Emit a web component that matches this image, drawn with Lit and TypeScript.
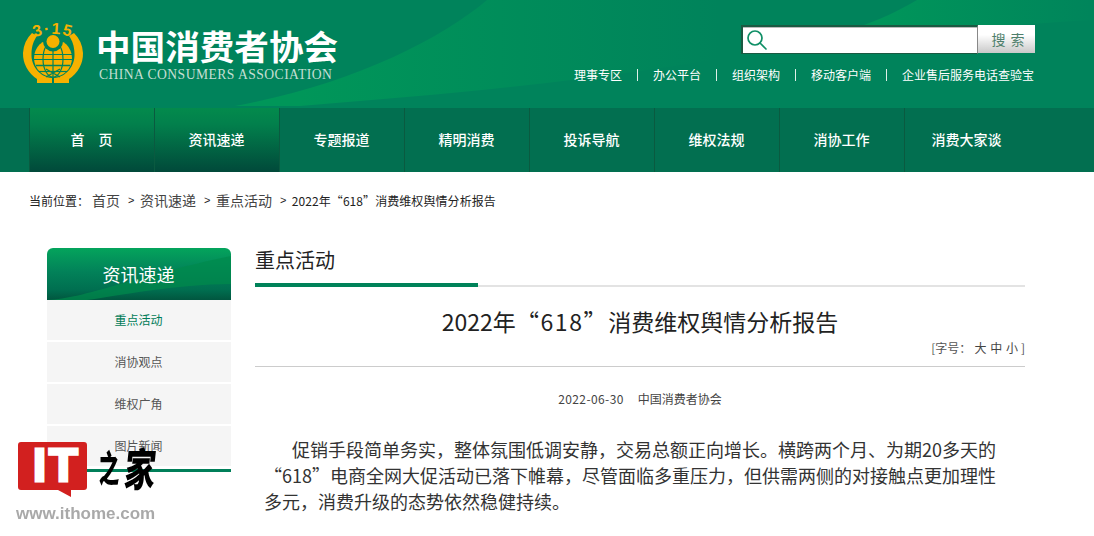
import { LitElement, html, css } from "lit";
import { customElement } from "lit/decorators.js";

@customElement("app-root")
export class AppRoot extends LitElement {
  static styles = css`
    :host { display: block; width: 1094px; height: 536px; overflow: hidden; position: relative; background: #fff; font-family: "Noto Sans CJK SC", "Noto Sans", sans-serif; color: #333; }
    .header { position: relative; height: 108px; background: #00835b; display: flex; justify-content: space-between; overflow: hidden; }
    .swoosh { position: absolute; left: 0; top: 0; width: 1094px; height: 108px; }
    .brand { position: relative; display: flex; gap: 11px; padding: 21px 0 0 22px; }
    .logo { width: 62px; height: 64px; flex: none; overflow: visible; }
    .brand-text { display: flex; flex-direction: column; padding-top: 5px; }
    .cn { font-size: 34.6px; line-height: 38px; margin-left: 1px; font-weight: 700; color: #fff; white-space: nowrap; height: 38px; }
    .en { font-family: "Liberation Serif", serif; font-size: 13.6px; letter-spacing: .47px; line-height: 16px; color: #c4dfd3; margin: 3px 0 0 4px; white-space: nowrap; }
    .tools { position: relative; display: flex; flex-direction: column; align-items: flex-end; padding: 25px 59px 0 0; }
    .search { display: flex; height: 29px; }
    .input { width: 237px; box-sizing: border-box; height: 29px; background: #fff; border: 1px solid #1a5a42; border-top-width: 2px; border-left-width: 2px; border-right-color: #888; box-shadow: inset 0 1px 0 #bbb; display: flex; align-items: center; padding-left: 3px; }
    .btn { width: 57px; height: 28px; background: linear-gradient(#fff 35%, #c9c9c9); color: #4f7f6c; font-size: 14px; letter-spacing: 5px; text-indent: 8px; text-align: center; line-height: 28px; }
    .links { display: flex; align-items: center; margin: 12px 1px 0 0; color: #fff; font-size: 12px; line-height: 18px; }
    .links i { width: 1px; height: 12px; background: #dff0e8; margin: 0 15px; }
    .nav { height: 64px; background: #026f50; padding-left: 29px; display: flex; }
    .nav a { width: 123px; padding-right: 1px; border-left: 1px solid #0a5a40; text-align: center; color: #fff; font-size: 14px; line-height: 62px; font-weight: 500; white-space: pre; }
    .nav a.on { background: linear-gradient(#038a4c 0%, #02804c 25%, #01493a 100%); }
    .crumb { display: flex; align-items: center; height: 20px; margin-top: 18px; padding-left: 29px; font-size: 12px; color: #222; white-space: nowrap; }
    .crumb .big { font-size: 14px; color: #444; }
    .crumb .sep { margin: 0 5.5px 0 8px; font-size: 11px; font-family: "Liberation Sans", sans-serif; }
    .crumb .last { letter-spacing: .07px; }
    .lead { margin-right: 3px; }
    .content { display: flex; margin-top: 38px; padding-left: 47px; gap: 24px; }
    .side { width: 184px; flex: none; border-bottom: 3px solid #007f59; height: 224px; box-sizing: border-box; display: flex; flex-direction: column; gap: 2px; }
    .side-h { position: relative; height: 52px; margin-bottom: -2px; padding-right: 1px; border-radius: 6px 6px 0 0; overflow: hidden; background: linear-gradient(#04a45c 0%, #028259 45%, #006f50 80%, #01563f 100%); color: #fff; font-size: 18px; line-height: 52px; text-align: center; }
    .side-h svg { position: absolute; left: 0; top: 0; }
    .side-h span { position: relative; }
    .side a { height: 40px; flex: none; padding-right: 1px; background: #f5f5f5; font-size: 12px; color: #555; text-align: center; line-height: 40px; }
    .side a.on { color: #007c58; }
    .main { width: 770px; flex: none; }
    .tab { height: 37px; position: relative; border-bottom: 2px solid #e3e3e3; font-size: 20px; line-height: 24px; color: #222; }
    .tab::after { content: ""; position: absolute; left: 0; bottom: -2px; width: 223px; height: 4px; background: #008259; }
    h1 { margin: 16px 0 0; font-size: 23px; line-height: 36px; font-weight: 400; text-align: center; color: #222; }
    h1 span { letter-spacing: 1.6px; }
    .size { margin-top: 1px; font-size: 12px; line-height: 16px; text-align: right; color: #555; padding-bottom: 10px; border-bottom: 1px solid #ccc; }
    .size b { font-weight: 400; color: #444; margin: 0 .5px; }
    .size b:last-of-type { margin-right: 3px; }
    .meta { display: flex; justify-content: center; gap: 14px; margin-top: 24px; font-size: 12px; line-height: 16px; color: #444; }
    .date { letter-spacing: .4px; }
    .body { margin: 29px 0 0 9px; font-size: 18px; line-height: 26px; color: #333; white-space: nowrap; }
    .indent { padding-left: 28px; }
    .wm { position: absolute; left: 18px; top: 442px; width: 140px; height: 86px; }
    .wm svg { position: absolute; left: 0; top: 0; }
    .it { position: absolute; left: 15px; top: -1px; font: 700 47px/48px "Liberation Sans", sans-serif; color: #fff; -webkit-text-stroke: 3px #fff; letter-spacing: 3px; white-space: nowrap; }
    .zhi { position: absolute; left: 79px; top: 0; height: 50px; display: flex; color: #000; filter: blur(0.4px); font-weight: 900; white-space: nowrap; }
    .zhi span { display: block; }
    .z1 { font-size: 24px; line-height: 50px; transform: scale(.85, 1.5); margin-right: 4px; }
    .z2 { font-size: 31px; line-height: 50px; transform: skewX(-6deg) scale(1, 1.45); }
    .url { position: absolute; left: -2px; top: 62px; font: 700 17px/20px "Liberation Sans", sans-serif; color: #a9a9a9; white-space: nowrap; filter: blur(0.3px); }
  `;

  render() {
    const nav = ["首　页", "资讯速递", "专题报道", "精明消费", "投诉导航", "维权法规", "消协工作", "消费大家谈"];
    return html`
      <div class="header">
        <svg class="swoosh" viewBox="0 0 1094 108">
          <defs>
            <linearGradient id="a" gradientUnits="userSpaceOnUse" x1="300" y1="0" x2="720" y2="0"><stop offset="0" stop-color="#009659"/><stop offset="1" stop-color="#00835b"/></linearGradient>
            <linearGradient id="b" gradientUnits="userSpaceOnUse" x1="880" y1="0" x2="1090" y2="0"><stop offset="0" stop-color="#00955a"/><stop offset="1" stop-color="#00855b"/></linearGradient>
          </defs>
          <path d="M487 0C440 40 350 85 235 106H300C480 92 650 75 790 45C840 32 880 20 917 0Z" fill="url(#a)"/>
          <path d="M917 0C880 22 840 35 790 45C900 35 1000 25 1094 20V0Z" fill="url(#b)"/>
        </svg>
        <div class="brand">
          <svg class="logo" viewBox="0 0 62 64">
            <defs><path id="arc" d="M6 19Q31 7 56 19"/></defs>
            <g fill="#f6b100">
              <path d="M10 12A30 30 0 0 0 1 32A30 30 0 0 0 15 58V62H30V57C17 56 9 44 9.500 33C9.500 25 12 19 15 15Z"/>
              <path d="M52 12A30 30 0 0 1 61 32A30 30 0 0 1 47 58V62H32V57C45 56 53 44 52.500 33C52.500 25 50 19 47 15Z"/>
              <circle cx="31" cy="37" r="19"/>
            </g>
            <g fill="none" stroke="#00835b">
              <circle cx="31" cy="20.500" r="10" fill="#00835b" stroke="none"/>
              <path stroke-width="1.200" d="M31 29V56M12 33.500H50M12 38.500H50"/>
              <path stroke-width="1.600" d="M14 44.500H48"/>
              <path stroke-width="1.200" d="M17 50.500H45"/>
              <ellipse cx="31" cy="38" rx="10" ry="18" stroke-width="1.200"/>
              <path stroke-width="1.400" d="M24 48l14 8M38 48l-14 8"/>
            </g>
            <circle cx="31" cy="20.500" r="6.500" fill="#f6b100"/>
            <text font-family="Liberation Sans, sans-serif" font-size="16" font-weight="700" fill="#f6b100" letter-spacing="1.500" text-anchor="middle"><textPath href="#arc" startOffset="50%">3·15</textPath></text>
          </svg>
          <div class="brand-text">
            <div class="cn">中国消费者协会</div>
            <div class="en">CHINA CONSUMERS ASSOCIATION</div>
          </div>
        </div>
        <div class="tools">
          <div class="search">
            <div class="input">
              <svg width="22" height="22" viewBox="0 0 22 22" fill="none" stroke="#0f8f66" stroke-width="1.700"><circle cx="9" cy="9" r="7"/><path d="M14 14l6 6" stroke-linecap="round"/></svg>
            </div>
            <div class="btn">搜索</div>
          </div>
          <div class="links">
            <span>理事专区</span><i></i><span>办公平台</span><i></i><span>组织架构</span><i></i><span>移动客户端</span><i></i><span>企业售后服务电话查验宝</span>
          </div>
        </div>
      </div>
      <div class="nav">
        ${nav.map((n, i) => html`<a class=${i < 2 ? "on" : ""}>${n}</a>`)}
      </div>
      <div class="crumb">
        <span class="lead">当前位置：</span><span class="big">首页</span><span class="sep">&gt;</span><span class="big">资讯速递</span><span class="sep">&gt;</span><span class="big">重点活动</span><span class="sep">&gt;</span><span class="last">2022年“618”消费维权舆情分析报告</span>
      </div>
      <div class="content">
        <div class="side">
          <div class="side-h">
            <svg width="184" height="52" viewBox="0 0 184 52"><path d="M0 52C40 50 80 30 184 8V36C130 36 70 48 40 52Z" fill="#008a4c" opacity=".7"/></svg>
            <span>资讯速递</span>
          </div>
          <a class="on">重点活动</a>
          <a>消协观点</a>
          <a>维权广角</a>
          <a>图片新闻</a>
        </div>
        <div class="main">
          <div class="tab">重点活动</div>
          <h1>2022年<span>“618”</span>消费维权舆情分析报告</h1>
          <div class="size">[字号： <b>大</b> <b>中</b> <b>小</b>]</div>
          <div class="meta"><span class="date">2022-06-30</span><span>中国消费者协会</span></div>
          <div class="body">
            <div class="indent">促销手段简单务实，整体氛围低调安静，交易总额正向增长。横跨两个月、为期20多天的</div>
            <div>“618”电商全网大促活动已落下帷幕，尽管面临多重压力，但供需两侧的对接触点更加理性</div>
            <div>多元，消费升级的态势依然稳健持续。</div>
          </div>
        </div>
      </div>
      <div class="wm">
        <svg width="72" height="58" viewBox="0 0 72 58"><path d="M3 0H66Q69 0 69 3V45Q69 48 66 48H53L53 55L40 48H3Q0 48 0 45V3Q0 0 3 0Z" fill="#d2201f"/></svg>
        <span class="it">IT</span>
        <div class="zhi"><span class="z1">之</span><span class="z2">家</span></div>
        <span class="url">www.ithome.com</span>
      </div>
    `;
  }
}
